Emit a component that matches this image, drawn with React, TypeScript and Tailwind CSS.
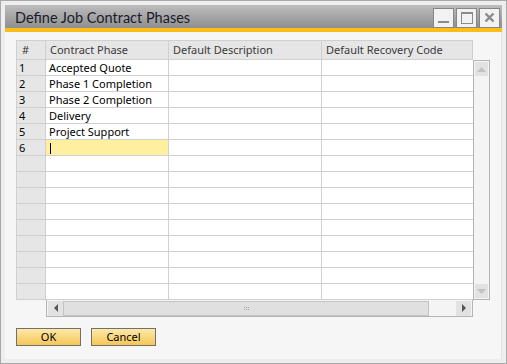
import React from "react";

const rows = ["Accepted Quote", "Phase 1 Completion", "Phase 2 Completion", "Delivery", "Project Support", ""];

export default function App() {
  const emptyCount = 15;
  const all = Array.from({ length: emptyCount }, (_, i) => (i < rows.length ? rows[i] : null));
  return (
    <div className="w-[507px] h-[364px] border border-[#a8a8a8] bg-[#eeeeee] p-[4px] flex flex-col" style={{ fontFamily: '"Noto Sans", sans-serif' }}>
      {/* Title bar */}
      <div className="h-[23px] shrink-0 flex items-center justify-between bg-gradient-to-b from-[#bdbdbd] to-[#8f8f8f] pl-[10px] pr-[2px]">
        <div className="text-[14.5px] leading-none text-[#1b1b2b] pt-[4px]" style={{ fontFamily: 'Lato, sans-serif' }}>Define Job Contract Phases</div>
        <div className="flex gap-[2px] items-center pt-[2px]">
          <div className="w-[21px] h-[20px] border border-[#868686] bg-[#f2f2f2] flex items-end justify-center pb-[4px]">
            <div className="w-[11px] h-[2px] bg-[#8a8a8a]" />
          </div>
          <div className="w-[21px] h-[20px] border border-[#868686] bg-[#f2f2f2] flex items-center justify-center">
            <div className="w-[12px] h-[12px] border border-[#8a8a8a] border-t-[2px]" />
          </div>
          <div className="w-[21px] h-[20px] border border-[#868686] bg-[#f2f2f2] flex items-center justify-center">
            <svg width="11" height="11" viewBox="0 0 11 11">
              <path d="M1.5 1.5 L9.5 9.5 M9.5 1.5 L1.5 9.5" stroke="#8a8a8a" strokeWidth="2.4" />
            </svg>
          </div>
        </div>
      </div>
      <div className="h-[4px] shrink-0 bg-[#fbbd18]" />
      {/* Content */}
      <div className="flex-1 bg-[#f6f6f6] border-r border-[#e4e4e4] pl-[11px] pt-[8px]">
        <div className="w-[474px]">
          {/* header */}
          <div className="flex h-[20px] text-[11px] text-[#3a3a3a]">
            <div className="w-[30px] bg-[#e6e6e6] border border-[#d0d0d0] pl-[5px] flex items-center">#</div>
            <div className="w-[123px] bg-[#e6e6e6] border-y border-r border-[#d0d0d0] pl-[4px] flex items-center">Contract Phase</div>
            <div className="w-[153px] bg-[#e6e6e6] border-y border-r border-[#d0d0d0] pl-[4px] flex items-center">Default Description</div>
            <div className="w-[151px] bg-[#e6e6e6] border-y border-r border-[#d0d0d0] pl-[4px] flex items-center">Default Recovery Code</div>
          </div>
          {/* body */}
          <div className="flex">
            <div className="w-[457px]">
              {all.map((r, i) => (
                <div key={i} className="flex h-[16px] text-[11px] text-black">
                  <div className="w-[30px] bg-[#e6e6e6] border-l border-r border-b border-[#d0d0d0] pl-[2px] flex items-center pt-[1px]">{i < rows.length ? i + 1 : ""}</div>
                  <div className={`w-[123px] border-r border-b border-[#d0d0d0] pl-[3px] flex items-center pt-[1px] ${i === 5 ? "bg-[#fff0a0]" : "bg-white"}`}>
                    {i === 5 ? <div className="w-[1px] h-[11px] bg-black ml-[1px]" /> : r}
                  </div>
                  <div className="w-[153px] bg-white border-r border-b border-[#d0d0d0]" />
                  <div className="w-[151px] bg-white border-b border-[#d0d0d0]" />
                </div>
              ))}
            </div>
            {/* vertical scrollbar */}
            <div className="w-[17px] h-[240px] border border-[#b4b4b4] bg-[#f4f4f4] flex flex-col justify-between p-[1px]">
              <div className="h-[14px] bg-[#e2e2e2] flex items-center justify-center">
                <svg width="9" height="5" viewBox="0 0 9 5"><path d="M0 5 L4.5 0 L9 5 Z" fill="#c2c2c2" /></svg>
              </div>
              <div className="h-[14px] bg-[#e2e2e2] flex items-center justify-center">
                <svg width="9" height="5" viewBox="0 0 9 5"><path d="M0 0 L4.5 5 L9 0 Z" fill="#c2c2c2" /></svg>
              </div>
            </div>
          </div>
          {/* horizontal scrollbar */}
          <div className="flex">
            <div className="w-[30px]" />
            <div className="w-[427px] h-[17px] border-l border-b border-r border-[#b4b4b4] bg-[#f4f4f4] flex items-center p-[1px] pl-[1px]">
              <div className="w-[15px] h-[15px] bg-[#e2e2e2] flex items-center justify-center">
                <svg width="4" height="8" viewBox="0 0 4 8"><path d="M4 0 L0 4 L4 8 Z" fill="#555555" /></svg>
              </div>
              <div className="w-[366px] h-[15px] bg-[#e0e0e0] border border-[#c4c4c4] flex items-center justify-center">
                <div className="grid grid-cols-3 gap-[1px]">
                  {Array.from({ length: 6 }).map((_, k) => (
                    <div key={k} className="w-[1px] h-[1px] bg-[#a0a0a0]" />
                  ))}
                </div>
              </div>
              <div className="flex-1" />
              <div className="w-[15px] h-[15px] bg-[#e2e2e2] flex items-center justify-center">
                <svg width="4" height="8" viewBox="0 0 4 8"><path d="M0 0 L4 4 L0 8 Z" fill="#555555" /></svg>
              </div>
            </div>
          </div>
          {/* buttons */}
          <div className="flex gap-[10px] mt-[11px]">
            <div className="w-[65px] h-[18px] border border-[#707070] bg-gradient-to-b from-[#fde9a8] to-[#f5c653] text-[11px] text-black flex items-center justify-center">OK</div>
            <div className="w-[65px] h-[18px] border border-[#707070] bg-gradient-to-b from-[#fde9a8] to-[#f5c653] text-[11px] text-black flex items-center justify-center">Cancel</div>
          </div>
        </div>
      </div>
    </div>
  );
}
